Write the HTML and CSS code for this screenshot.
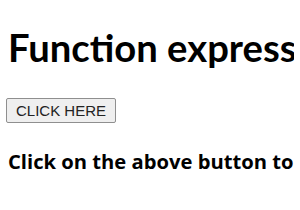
FILE: index.html
```html
<!DOCTYPE html>
<html lang="en">
<head>
  <meta charset="UTF-8">
  <title>Function expression</title>
  <link rel="stylesheet" href="styles.css">
</head>
<body>
  <h1 class="title">Function expression</h1>
  <button class="clickBtn">CLICK HERE</button>
  <h3 class="result">Click on the above button to see the result</h3>
</body>
</html>
```

FILE: styles.css
```css
body {
  margin: 8px 6px;
  font-family: Lato, "Open Sans", sans-serif;
  background-color: white;
  white-space: nowrap;
  overflow: hidden;
}
.title {
  font-size: 38.2px;
  font-weight: bold;
  margin: 16px 0 28px 2px;
}
.clickBtn {
  font-family: "Liberation Sans", Arial, sans-serif;
  font-size: 15px;
  color: #222;
  background-color: #efefef;
  border: 1px solid #8f8f8f;
  border-radius: 2px;
  padding: 3px 9px;
}
.result {
  font-family: "Open Sans", sans-serif;
  font-size: 20.2px;
  font-weight: bold;
  margin: 24px 0 0 2px;
}
```
